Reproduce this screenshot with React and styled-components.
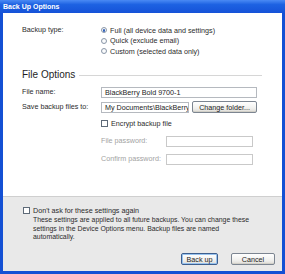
import React from "react";
import styled, { createGlobalStyle } from "styled-components";

const GlobalStyle = createGlobalStyle`
  html, body {
    margin: 0;
    padding: 0;
    background: #ffffff;
  }
  * {
    box-sizing: border-box;
  }
`;

const Window = styled.div`
  width: 285px;
  height: 274px;
  display: flex;
  flex-direction: column;
  background: #1450d4;
  padding: 0 3px 3px 3px;
  font-family: "Liberation Sans", Arial, sans-serif;
  font-size: 7.2px;
  color: #2b2b2b;
  overflow: hidden;
`;

const TitleBar = styled.div`
  height: 13px;
  margin: 0 -3px;
  padding: 0 3px;
  display: flex;
  align-items: center;
  background: linear-gradient(#4a8af4 0%, #1d62e2 35%, #1552d8 100%);
  color: #ffffff;
  font-weight: bold;
  font-size: 7px;
`;

const Body = styled.div`
  flex: 0 0 183px;
  background: #ffffff;
  padding: 12px 0 0 19px;
  display: flex;
  flex-direction: column;
`;

const FormRow = styled.div`
  display: grid;
  grid-template-columns: 79px auto;
  align-items: ${({ $top }) => ($top ? "start" : "center")};
  margin-top: ${({ $mt }) => $mt || 0}px;
`;

const Label = styled.div`
  line-height: 10.5px;
  color: ${({ $disabled }) => ($disabled ? "#a3a3a3" : "#2b2b2b")};
  white-space: nowrap;
`;

const RadioList = styled.div`
  display: flex;
  flex-direction: column;
`;

const Option = styled.label`
  display: flex;
  align-items: center;
  gap: 3px;
  height: 10.5px;
  white-space: nowrap;
`;

const Radio = styled.span`
  width: 6px;
  height: 6px;
  border-radius: 50%;
  border: 1px solid #8a97a8;
  background: radial-gradient(circle, #ffffff 0%, #eef1f5 100%);
  display: flex;
  align-items: center;
  justify-content: center;
  &::after {
    content: "";
    width: 2.5px;
    height: 2.5px;
    border-radius: 50%;
    background: ${({ $checked }) => ($checked ? "#2f5fb8" : "transparent")};
  }
`;

const Box = styled.span`
  width: 7px;
  height: 7px;
  border: 1px solid #5e6a78;
  background: #ffffff;
  flex: 0 0 auto;
`;

const Heading = styled.div`
  margin-top: 12.5px;
  display: flex;
  align-items: center;
  gap: 4px;
  font-size: 10px;
  line-height: 12px;
  color: #1e1e1e;
  padding-right: 20px;
  &::after {
    content: "";
    flex: 1;
    height: 1px;
    background: #d6d6d6;
  }
`;

const TextInput = styled.div`
  width: ${({ $w }) => $w}px;
  height: ${({ $h }) => $h || 11}px;
  border: 1px solid ${({ $disabled }) => ($disabled ? "#c9c9c9" : "#b5b9bf")};
  background: #ffffff;
  padding-left: 3px;
  display: flex;
  align-items: center;
  overflow: hidden;
  white-space: nowrap;
  color: #1c1c1c;
`;

const Controls = styled.div`
  display: flex;
  align-items: center;
  gap: 3px;
`;

const Button = styled.div`
  height: 12px;
  width: ${({ $w }) => $w}px;
  border: 1px solid ${({ $primary }) => ($primary ? "#3d5f8f" : "#7c8591")};
  border-radius: 2px;
  background: linear-gradient(#ffffff 0%, #f1f1ef 60%, #dedcd6 100%);
  box-shadow: ${({ $primary }) =>
    $primary ? "inset 0 0 0 1px #98c3ef" : "inset 0 -1px 0 #d2d0c8"};
  display: flex;
  align-items: center;
  justify-content: center;
  white-space: nowrap;
  color: #1c1c1c;
`;

const CheckRow = styled.label`
  display: flex;
  align-items: center;
  gap: 3px;
  height: 10px;
  white-space: nowrap;
`;

const PasswordGrid = styled.div`
  display: grid;
  grid-template-columns: 65px 87px;
  row-gap: 7px;
  align-items: center;
  margin-top: 8px;
`;

const Footer = styled.div`
  flex: 1;
  background: #e9e9e9;
  border-top: 1px solid #cfcfcf;
  padding: 8px 0 0 20px;
  display: flex;
  flex-direction: column;
`;

const Note = styled.p`
  margin: 1px 0 0 10px;
  line-height: 8.5px;
  font-size: 6.9px;
  white-space: nowrap;
  color: #2b2b2b;
`;

const ButtonBar = styled.div`
  margin-top: auto;
  margin-bottom: 6px;
  display: flex;
  justify-content: flex-end;
  gap: 13px;
  padding-right: 7px;
`;

export default function App() {
  return (
    <>
      <GlobalStyle />
      <Window>
        <TitleBar>Back Up Options</TitleBar>
        <Body>
          <FormRow $top>
            <Label>Backup type:</Label>
            <RadioList>
              <Option>
                <Radio $checked />
                Full (all device data and settings)
              </Option>
              <Option>
                <Radio />
                Quick (exclude email)
              </Option>
              <Option>
                <Radio />
                Custom (selected data only)
              </Option>
            </RadioList>
          </FormRow>

          <Heading>File Options</Heading>

          <FormRow $mt={6}>
            <Label>File name:</Label>
            <TextInput $w={156}>BlackBerry Bold 9700-1</TextInput>
          </FormRow>
          <FormRow $mt={3}>
            <Label>Save backup files to:</Label>
            <Controls>
              <TextInput $w={88}>My Documents\BlackBerry</TextInput>
              <Button $w={65}>Change folder...</Button>
            </Controls>
          </FormRow>
          <FormRow $mt={5}>
            <span />
            <div>
              <CheckRow>
                <Box />
                Encrypt backup file
              </CheckRow>
              <PasswordGrid>
                <Label $disabled>File password:</Label>
                <TextInput $w={87} $disabled />
                <Label $disabled>Confirm password:</Label>
                <TextInput $w={87} $disabled />
              </PasswordGrid>
            </div>
          </FormRow>
        </Body>
        <Footer>
          <CheckRow>
            <Box />
            Don't ask for these settings again
          </CheckRow>
          <Note>
            These settings are applied to all future backups. You can change
            these
            <br />
            settings in the Device Options menu. Backup files are named
            <br />
            automatically.
          </Note>
          <ButtonBar>
            <Button $w={37} $primary>
              Back up
            </Button>
            <Button $w={44}>Cancel</Button>
          </ButtonBar>
        </Footer>
      </Window>
    </>
  );
}
